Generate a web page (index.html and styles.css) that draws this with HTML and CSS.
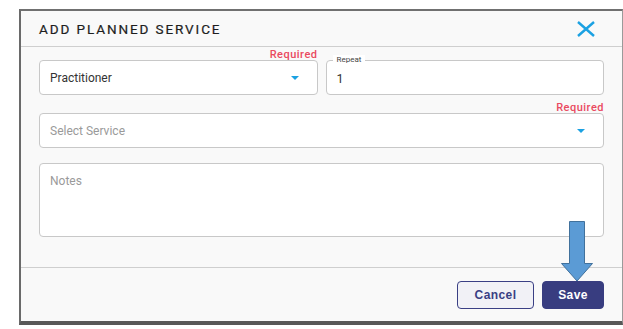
FILE: index.html
```html
<!DOCTYPE html>
<html lang="en">
<head>
  <meta charset="UTF-8" />
  <title>Add Planned Service</title>
  <link rel="stylesheet" href="styles.css">
</head>
<body>

  <div class="dialog">
    <div class="dialog-header">
      <h2>ADD PLANNED SERVICE</h2>
      <svg class="close" width="20" height="16" viewBox="0 0 20 16">
        <path d="M2 1 L18 15 M18 1 L2 15" stroke="#1ba1e2" stroke-width="2.4" fill="none"/>
      </svg>
    </div>

    <div class="dialog-body">
      <div class="row">
        <div class="field">
          <div class="required">Required</div>
          <div class="box select">
            <span class="value">Practitioner</span>
            <span class="caret"></span>
          </div>
        </div>
        <div class="field">
          <div class="required"></div>
          <div class="box outlined">
            <span class="legend">Repeat</span>
            <span class="value">1</span>
          </div>
        </div>
      </div>

      <div class="field">
        <div class="required">Required</div>
        <div class="box select">
          <span class="placeholder">Select Service</span>
          <span class="caret"></span>
        </div>
      </div>

      <div class="box notes">
        <span class="placeholder">Notes</span>
      </div>
    </div>

    <div class="dialog-footer">
      <button class="btn cancel">Cancel</button>
      <button class="btn save">Save</button>
    </div>

    <!-- annotation arrow pointing at Save -->
    <svg class="arrow" width="34" height="62" viewBox="0 0 34 62">
      <path d="M9.5 0.5 H24.5 V42.5 H32.5 L17 60 L1.5 42.5 H9.5 Z" fill="#5b9bd5" stroke="#41719c" stroke-width="1"/>
    </svg>
  </div>

</body>
</html>
```

FILE: styles.css
```css
* {
  box-sizing: border-box;
  margin: 0;
  padding: 0;
}

body {
  background: #fff;
  font-family: Roboto, "Liberation Sans", sans-serif;
  color: #333;
}

.dialog {
  position: relative;
  margin: 9px 0 0 19px;
  width: 604px;
  height: 316px;
  background: #f9f9f9;
  border-top: 2px solid #707070;
  border-left: 2px solid #6a6a6a;
  border-right: 1px solid #9a9a9a;
  border-bottom: 4px solid #585858;
  display: flex;
  flex-direction: column;
}

.dialog-header {
  height: 36px;
  display: flex;
  align-items: center;
  justify-content: space-between;
  padding: 0 26px 0 18px;
  border-bottom: 1px solid #cfcfcf;
}

.dialog-header h2 {
  font-size: 13.5px;
  font-weight: 400;
  letter-spacing: 1.9px;
  color: #1e1e1e;
  -webkit-text-stroke: 0.2px #1e1e1e;
}

.dialog-body {
  padding: 3px 18px 30px;
  display: flex;
  flex-direction: column;
}

.row {
  display: flex;
  gap: 8px;
}

.row .field {
  flex: 1;
}

.required {
  height: 10px;
  line-height: 10px;
  font-size: 11px;
  font-weight: 500;
  letter-spacing: 0.5px;
  color: #ea4a60;
  text-align: right;
}

.box {
  position: relative;
  background: #fff;
  border: 1px solid #c8c8c8;
  border-radius: 4px;
  height: 35px;
  display: flex;
  align-items: center;
  padding: 0 10px;
  font-size: 12px;
}

.row + .field {
  margin-top: 8px;
}

.select {
  justify-content: space-between;
}

.value {
  color: #333;
}

.placeholder {
  color: #9a9a9a;
}

.caret {
  width: 0;
  height: 0;
  border-left: 4px solid transparent;
  border-right: 4px solid transparent;
  border-top: 4px solid #1ba1e2;
  margin-right: 8px;
}

.outlined {
  padding-top: 2px;
  font-size: 12.5px;
}

.legend {
  position: absolute;
  top: -6px;
  left: 6px;
  padding: 0 4px;
  background: #fff;
  font-size: 8px;
  line-height: 10px;
  color: #444;
}

.notes {
  margin-top: 15px;
  height: 74px;
  align-items: flex-start;
  padding-top: 10px;
}

.dialog-footer {
  border-top: 1px solid #cfcfcf;
  display: flex;
  justify-content: flex-end;
  gap: 8px;
  padding: 13px 18px 0;
  flex: 1;
}

.btn {
  height: 28px;
  border-radius: 4px;
  font-family: "Liberation Sans", Arial, sans-serif;
  font-weight: bold;
  font-size: 12px;
  letter-spacing: 0.4px;
  cursor: pointer;
}

.cancel {
  width: 77px;
  background: #f1f1f6;
  color: #3a3f84;
  border: 1.5px solid #3a3f84;
}

.save {
  width: 62px;
  background: #383d80;
  color: #fff;
  border: 1px solid #383d80;
}

.arrow {
  position: absolute;
  left: 539px;
  top: 210px;
}
```
